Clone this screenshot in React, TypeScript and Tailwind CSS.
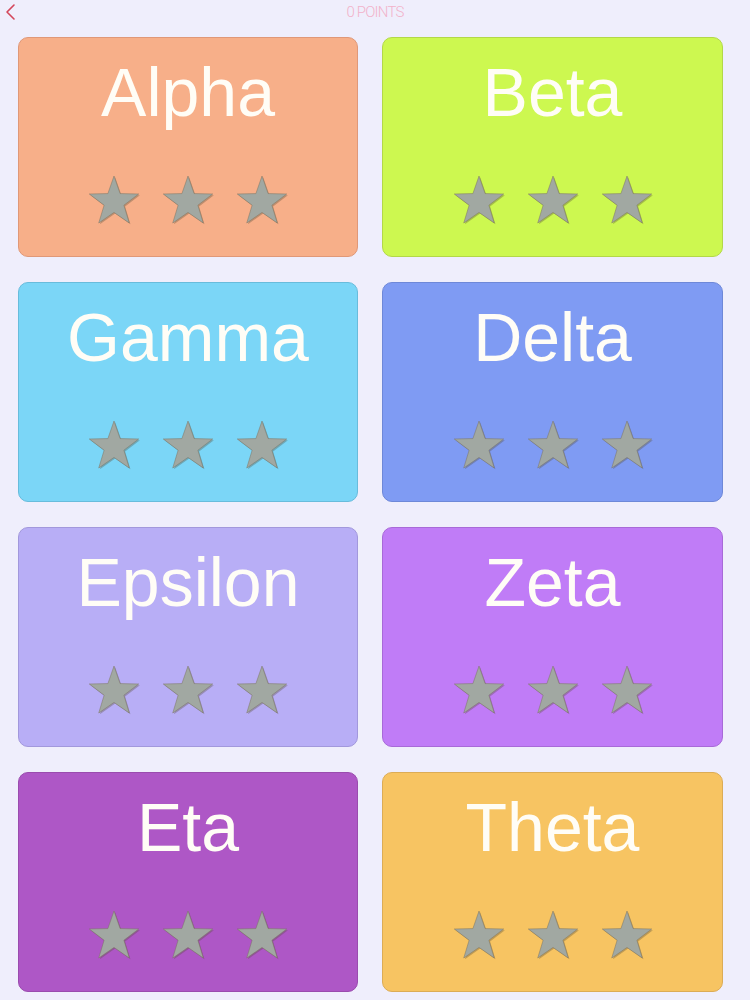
import React from "react";

const LEVELS: { name: string; bg: string; border: string }[] = [
  { name: "Alpha", bg: "bg-[#f7af89]", border: "border-[#e09878]" },
  { name: "Beta", bg: "bg-[#cdf850]", border: "border-[#b3d848]" },
  { name: "Gamma", bg: "bg-[#7bd6f7]", border: "border-[#68bcdc]" },
  { name: "Delta", bg: "bg-[#7f9bf3]", border: "border-[#6e88d8]" },
  { name: "Epsilon", bg: "bg-[#b8aef6]", border: "border-[#a298dc]" },
  { name: "Zeta", bg: "bg-[#c07cf7]", border: "border-[#a86ad8]" },
  { name: "Eta", bg: "bg-[#ae57c6]", border: "border-[#9a4cae]" },
  { name: "Theta", bg: "bg-[#f7c462]", border: "border-[#dcac56]" },
];

function Star() {
  // regular five-point star, outer radius 26, inner ~10
  const pts: string[] = [];
  for (let i = 0; i < 10; i++) {
    const r = i % 2 === 0 ? 26 : 10.4;
    const a = (Math.PI / 5) * i - Math.PI / 2;
    pts.push(`${(26 + r * Math.cos(a)).toFixed(2)},${(27 + r * Math.sin(a)).toFixed(2)}`);
  }
  return (
    <svg width="52" height="50" viewBox="0 0 52 50" className="overflow-visible">
      <polygon points={pts.join(" ")} transform="translate(1.2 1.2)" fill="rgba(90,80,60,0.35)" />
      <polygon points={pts.join(" ")} fill="#a1a8a2" stroke="rgba(120,110,90,0.45)" strokeWidth="1" strokeLinejoin="miter" />
    </svg>
  );
}

function LevelCard({ name, bg, border }: { name: string; bg: string; border: string }) {
  return (
    <div className={`h-[220px] rounded-[10px] border ${bg} ${border} flex flex-col items-center`}>
      <div className="pt-[20px] text-[68px] leading-none text-[#fffdf6] font-['Liberation_Sans',Arial,sans-serif]">
        {name}
      </div>
      <div className="mt-auto mb-[31px] flex gap-[22px]">
        <Star />
        <Star />
        <Star />
      </div>
    </div>
  );
}

export default function App() {
  return (
    <div className="w-[750px] h-[1000px] bg-[#efeefc] overflow-hidden">
      <div className="relative h-[37px]">
        <svg width="14" height="18" viewBox="0 0 14 18" className="absolute left-[3px] top-[3px]">
          <path d="M11 2 L4 9 L11 16" fill="none" stroke="#d4465a" strokeWidth="1.6" strokeLinecap="round" strokeLinejoin="round" />
        </svg>
        <div className="pt-[3px] text-center text-[15px] leading-[18px] tracking-[-0.8px] font-light text-[#f2b2ca] font-['Roboto',sans-serif]">
          0 POINTS
        </div>
      </div>
      <div className="pl-[18px] grid grid-cols-[340px_341px] gap-x-6 gap-y-[25px]">
        {LEVELS.map((l) => (
          <LevelCard key={l.name} {...l} />
        ))}
      </div>
    </div>
  );
}
